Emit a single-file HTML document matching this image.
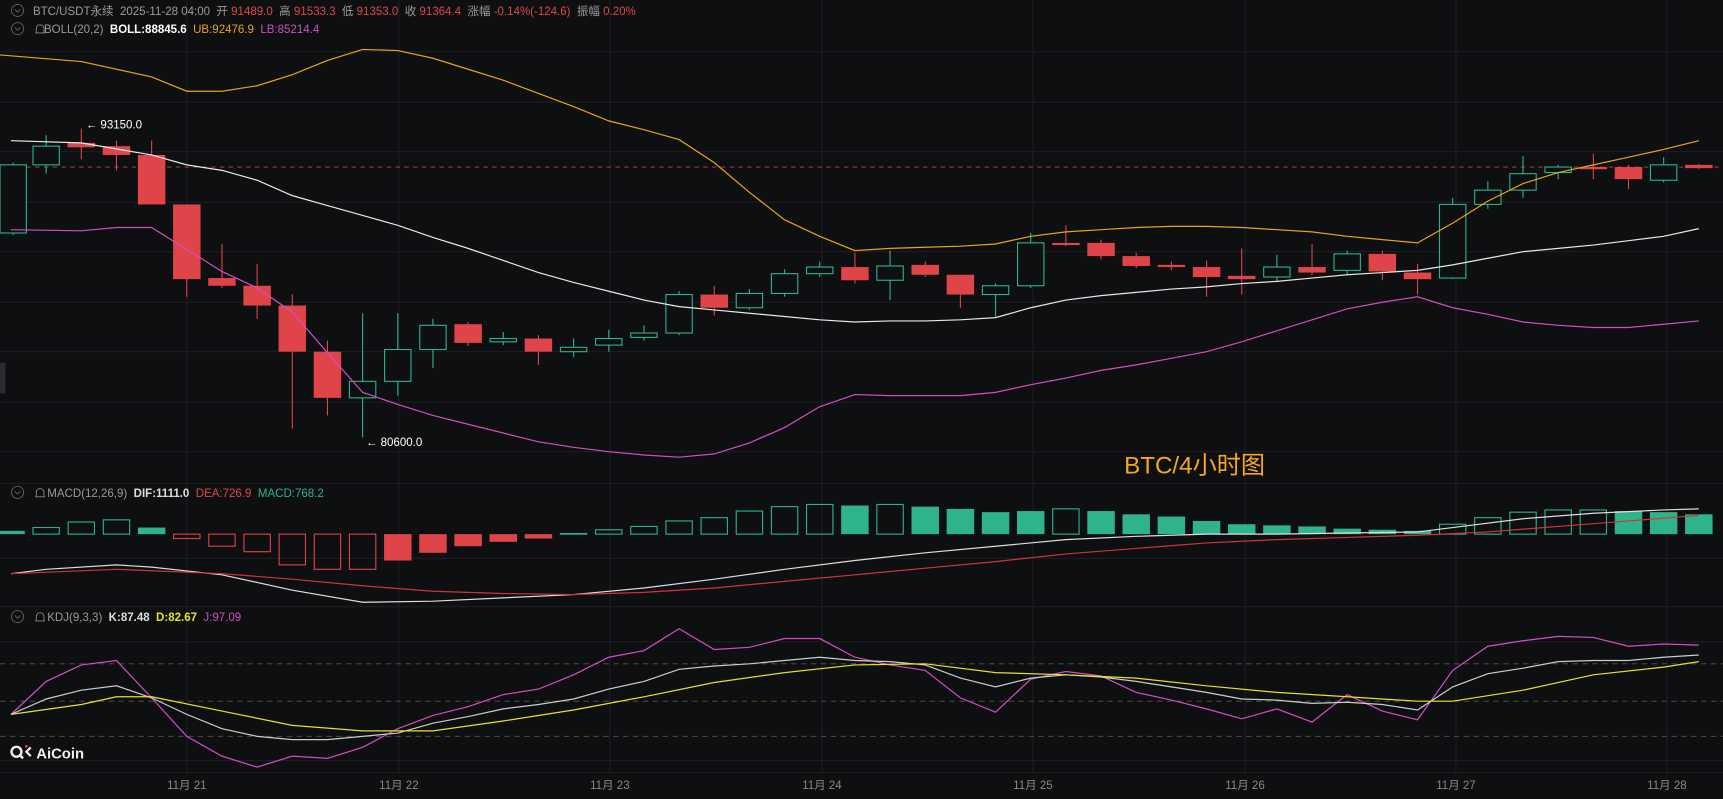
<!DOCTYPE html>
<html><head><meta charset="utf-8"><style>
html,body{margin:0;padding:0;background:#0e0f11;overflow:hidden}
svg{display:block}
text{font-family:"Liberation Sans","Noto Sans CJK SC",sans-serif}
</style></head><body>
<svg id="s" width="1723" height="799" viewBox="0 0 1568 727" preserveAspectRatio="none" xmlns="http://www.w3.org/2000/svg">
<rect width="1568" height="727" fill="#0e0f11"/>
<g id="grid"></g>
<g id="main"></g>
<g font-size="10.5">
<circle cx="16" cy="9.5" r="5.5" fill="none" stroke="#666" stroke-width="0.8"/><path d="M13.5 8.5 L16 11 L18.5 8.5" fill="none" stroke="#666" stroke-width="0.8"/>
<text x="30" y="13.5" fill="#9a9a9a">BTC/USDT永续 &#160;2025-11-28 04:00 &#160;开 <tspan fill="#e0464b">91489.0</tspan> &#160;高 <tspan fill="#e0464b">91533.3</tspan> &#160;低 <tspan fill="#e0464b">91353.0</tspan> &#160;收 <tspan fill="#e0464b">91364.4</tspan> &#160;涨幅 <tspan fill="#e0464b">-0.14%(-124.6)</tspan> &#160;振幅 <tspan fill="#e0464b">0.20%</tspan></text>
<circle cx="16" cy="26" r="5.5" fill="none" stroke="#666" stroke-width="0.8"/><path d="M13.5 25 L16 27.5 L18.5 25" fill="none" stroke="#666" stroke-width="0.8"/>
<path d="M32 30 h9 M33 30 v-4 a3.5 3.5 0 0 1 7 0 v4" fill="none" stroke="#888" stroke-width="0.8"/>
<text x="40" y="30" fill="#9a9a9a">BOLL(20,2) &#160;<tspan fill="#fff" font-weight="bold">BOLL:88845.6</tspan> &#160;<tspan fill="#e8a31a">UB:92476.9</tspan> &#160;<tspan fill="#d04fc0">LB:85214.4</tspan></text>
<circle cx="16" cy="448" r="5.5" fill="none" stroke="#666" stroke-width="0.8"/><path d="M13.5 447 L16 449.5 L18.5 447" fill="none" stroke="#666" stroke-width="0.8"/>
<path d="M32 452 h9 M33 452 v-4 a3.5 3.5 0 0 1 7 0 v4" fill="none" stroke="#888" stroke-width="0.8"/>
<text x="43" y="452" fill="#9a9a9a">MACD(12,26,9) &#160;<tspan fill="#ddd" font-weight="bold">DIF:1111.0</tspan> &#160;<tspan fill="#e0464b">DEA:726.9</tspan> &#160;<tspan fill="#2fb38a">MACD:768.2</tspan></text>
<circle cx="16" cy="561" r="5.5" fill="none" stroke="#666" stroke-width="0.8"/><path d="M13.5 560 L16 562.5 L18.5 560" fill="none" stroke="#666" stroke-width="0.8"/>
<path d="M32 565 h9 M33 565 v-4 a3.5 3.5 0 0 1 7 0 v4" fill="none" stroke="#888" stroke-width="0.8"/>
<text x="43" y="565" fill="#9a9a9a">KDJ(9,3,3) &#160;<tspan fill="#ddd" font-weight="bold">K:87.48</tspan> &#160;<tspan fill="#e6e030" font-weight="bold">D:82.67</tspan> &#160;<tspan fill="#d04fc0">J:97.09</tspan></text>
<text x="78" y="117" fill="#fff">← 93150.0</text>
<text x="333" y="406" fill="#fff">← 80600.0</text>
<text x="1023" y="431" fill="#f5a623" font-size="22">BTC/4小时图</text>
<g fill="#888" font-size="10.5">
<text x="170" y="718" text-anchor="middle">11月 21</text><text x="363" y="718" text-anchor="middle">11月 22</text>
<text x="555" y="718" text-anchor="middle">11月 23</text><text x="748" y="718" text-anchor="middle">11月 24</text>
<text x="940" y="718" text-anchor="middle">11月 25</text><text x="1133" y="718" text-anchor="middle">11月 26</text>
<text x="1325" y="718" text-anchor="middle">11月 27</text><text x="1517" y="718" text-anchor="middle">11月 28</text>
</g>
<g fill="#eee"><circle cx="15" cy="684" r="4.5" fill="none" stroke="#eee" stroke-width="2.2"/><path d="M18 687 l3 3" stroke="#eee" stroke-width="2.2"/><circle cx="24" cy="679" r="1.3" fill="#e0464b"/><path d="M28 680 l-4 4 l4 4" fill="none" stroke="#eee" stroke-width="2"/>
<text x="33" y="690" font-size="13.5" font-weight="bold">AiCoin</text></g>
<rect x="0" y="330" width="5" height="28" rx="1" fill="#2a2c30"/>
</g>
</svg>
<script>
var NS="http://www.w3.org/2000/svg";
function el(p,t,a){var e=document.createElementNS(NS,t);for(var k in a)e.setAttribute(k,a[k]);p.appendChild(e);return e;}
var G=document.getElementById('grid'),M=document.getElementById('main');
[47,93,138,184,229,275,320,366,411].forEach(function(y){el(G,'line',{x1:0,x2:1568,y1:y,y2:y,stroke:'#1c1e22','stroke-width':1});});
[440,508,552,584,692,703].forEach(function(y){el(G,'line',{x1:0,x2:1568,y1:y,y2:y,stroke:'#1c1e22','stroke-width':1});});
[170,363,555,748,940,1133,1325,1517].forEach(function(x){el(G,'line',{x1:x,x2:x,y1:0,y2:703,stroke:'#1c1e22','stroke-width':1});});
[604,638,670].forEach(function(y){el(G,'line',{x1:0,x2:1568,y1:y,y2:y,stroke:'#555','stroke-width':0.8,'stroke-dasharray':'5,4'});});
el(G,'line',{x1:0,x2:1568,y1:152,y2:152,stroke:'#c0454b','stroke-width':0.8,'stroke-dasharray':'4,4'});
var GR='#2fb38a',RD='#df4449';
// x, top, bottom, high, low, green?
var C=[[12,150,212,148,214,1],[42,133,150,123,158,1],[74,130,134,117,145,0],[106,133,141,128,155,0],[138,141,186,128,186,0],[170,186,254,186,270,0],[202,253,260,222,262,0],[234,260,278,240,290,0],[266,278,320,268,390,0],[298,320,362,310,378,0],[330,347,362,285,398,1],[362,318,347,285,360,1],[394,296,318,290,335,1],[426,295,312,293,315,0],[458,308,311,302,314,1],[490,308,320,305,332,0],[522,316,320,308,325,1],[554,308,314,300,320,1],[586,303,307,296,310,1],[618,268,303,265,305,1],[650,268,280,260,287,0],[682,267,280,263,282,1],[714,249,267,245,270,1],[746,243,249,238,252,1],[778,243,255,230,258,0],[810,242,255,228,273,1],[842,241,250,238,252,0],[874,250,268,250,280,0],[906,260,268,258,288,1],[938,221,260,212,262,1],[970,221,223,205,224,0],[1002,221,233,218,236,0],[1034,233,242,230,244,0],[1066,241,243,238,246,0],[1098,243,252,237,270,0],[1130,251,254,226,268,0],[1162,243,252,232,256,1],[1194,243,248,222,250,0],[1226,231,246,228,250,1],[1258,231,247,228,255,0],[1290,248,254,240,268,0],[1322,186,253,180,254,1],[1354,173,186,165,190,1],[1386,158,173,142,180,1],[1418,152,157,150,163,1],[1450,152,154,140,163,0],[1482,152,163,150,172,0],[1514,150,164,143,166,1],[1546,150,153,149,154,0]];
C.forEach(function(c){var col=c[5]?GR:RD;
el(M,'line',{x1:c[0],x2:c[0],y1:c[3],y2:c[4],stroke:col,'stroke-width':1});
if(c[5])el(M,'rect',{x:c[0]-12,y:c[1],width:24,height:Math.max(c[2]-c[1],1),fill:'#0e0f11',stroke:col,'stroke-width':1});
else el(M,'rect',{x:c[0]-12.5,y:c[1],width:25,height:Math.max(c[2]-c[1],1.5),fill:col});});
function line(pts,col,w){var d='';for(var i=0;i<pts.length;i+=2)d+=(i?'L':'M')+pts[i]+' '+pts[i+1];el(M,'path',{d:d,fill:'none',stroke:col,'stroke-width':w||1.1});}
line([0,50,74,56,138,70,170,83,202,83,234,78,266,68,298,55,330,45,362,46,394,53,426,63,458,73,490,85,522,97,554,110,586,118,618,127,650,148,682,175,714,200,746,215,778,228,810,226,842,225,874,224,906,222,938,215,970,211,1002,209,1034,207,1066,206,1098,206,1130,207,1162,209,1194,211,1226,215,1258,218,1290,221,1322,203,1354,183,1386,167,1418,157,1450,150,1482,143,1514,136,1546,128],'#e8a31a');
line([10,128,74,130,138,141,170,150,202,155,234,164,266,178,298,187,330,196,362,205,394,216,426,226,458,237,490,248,522,257,554,265,586,273,618,279,650,282,682,285,714,288,746,291,778,293,810,292,842,292,874,291,906,289,938,280,970,273,1002,269,1034,266,1066,263,1098,261,1130,258,1162,256,1194,253,1226,250,1258,248,1290,246,1322,241,1354,235,1386,229,1418,226,1450,223,1482,219,1514,215,1546,208],'#e8e8e8');
line([10,209,74,210,106,207,138,207,170,227,202,247,234,262,266,284,298,321,330,357,362,368,394,378,426,386,458,394,490,402,522,407,554,411,586,414,618,416,650,413,682,403,714,389,746,370,778,359,810,360,842,360,874,360,906,357,938,350,970,344,1002,337,1034,332,1066,326,1098,320,1130,311,1162,301,1194,291,1226,281,1258,275,1290,270,1322,280,1354,286,1386,293,1418,296,1450,298,1482,298,1514,295,1546,292],'#d04fc0');
// MACD histogram: x, value y, filled
var Z=486;
var H=[[10,483,1],[42,480,0],[74,475,0],[106,473,0],[138,480,1],[170,490,0],[202,497,0],[234,502,0],[266,514,0],[298,518,0],[330,518,0],[362,510,1],[394,503,1],[426,497,1],[458,493,1],[490,490,1],[522,485,1],[554,482,0],[586,479,0],[618,474,0],[650,471,0],[682,465,0],[714,461,0],[746,459,0],[778,460,1],[810,459,0],[842,461,1],[874,463,1],[906,466,1],[938,465,1],[970,463,0],[1002,465,1],[1034,468,1],[1066,470,1],[1098,474,1],[1130,477,1],[1162,478,1],[1194,479,1],[1226,481,1],[1258,482,1],[1290,483,1],[1322,477,0],[1354,471,0],[1386,466,0],[1418,464,0],[1450,464,0],[1482,465,1],[1514,466,1],[1546,468,1]];
H.forEach(function(h){var up=h[1]<Z,col=up?GR:RD,y=Math.min(h[1],Z),ht=Math.max(Math.abs(h[1]-Z),1.5);
if(h[2])el(M,'rect',{x:h[0]-12.5,y:y,width:25,height:ht,fill:col});
else el(M,'rect',{x:h[0]-12,y:y,width:24,height:ht,fill:'none',stroke:col,'stroke-width':1});});
line([10,522,42,518,106,514,138,516,202,523,266,537,330,548,394,547,458,544,522,541,586,535,650,527,714,518,778,510,842,503,906,497,970,491,1034,488,1098,486,1162,486,1226,485,1290,484,1322,480,1386,472,1450,467,1514,464,1546,463],'#ddd');
line([10,522,106,518,202,522,266,527,330,533,394,538,458,540,522,541,586,539,650,535,714,529,778,523,842,517,906,511,970,504,1034,499,1098,494,1162,491,1226,489,1290,487,1354,484,1418,479,1482,474,1546,469],'#d0343a');
line([10,650,42,620,74,605,106,601,138,635,170,670,202,688,234,698,266,688,298,690,330,680,362,663,394,651,426,643,458,632,490,627,522,614,554,598,586,592,618,572,650,591,682,589,714,581,746,581,778,598,810,605,842,610,874,635,906,648,938,618,970,611,1002,615,1034,630,1066,637,1098,645,1130,654,1162,645,1194,657,1226,632,1258,647,1290,655,1322,610,1354,588,1386,583,1418,579,1450,580,1482,588,1514,586,1546,587],'#d04fc0');
line([10,650,42,636,74,628,106,624,138,635,170,650,202,663,234,670,266,673,298,673,330,670,362,667,394,658,426,652,458,645,490,641,522,636,554,627,586,620,618,609,650,606,682,604,714,601,746,598,778,601,810,602,842,605,874,617,906,625,938,617,970,614,1002,616,1034,620,1066,625,1098,630,1130,636,1162,637,1194,640,1226,639,1258,641,1290,646,1322,625,1354,613,1386,608,1418,602,1450,601,1482,601,1514,598,1546,596],'#ccc');
line([10,650,74,641,106,634,138,634,202,647,266,660,330,665,394,665,458,656,522,646,586,634,650,621,714,612,778,605,842,604,906,612,970,614,1034,617,1098,624,1162,630,1226,634,1290,638,1322,638,1386,628,1450,614,1514,607,1546,602],'#e6e030');
</script>
</body></html>
